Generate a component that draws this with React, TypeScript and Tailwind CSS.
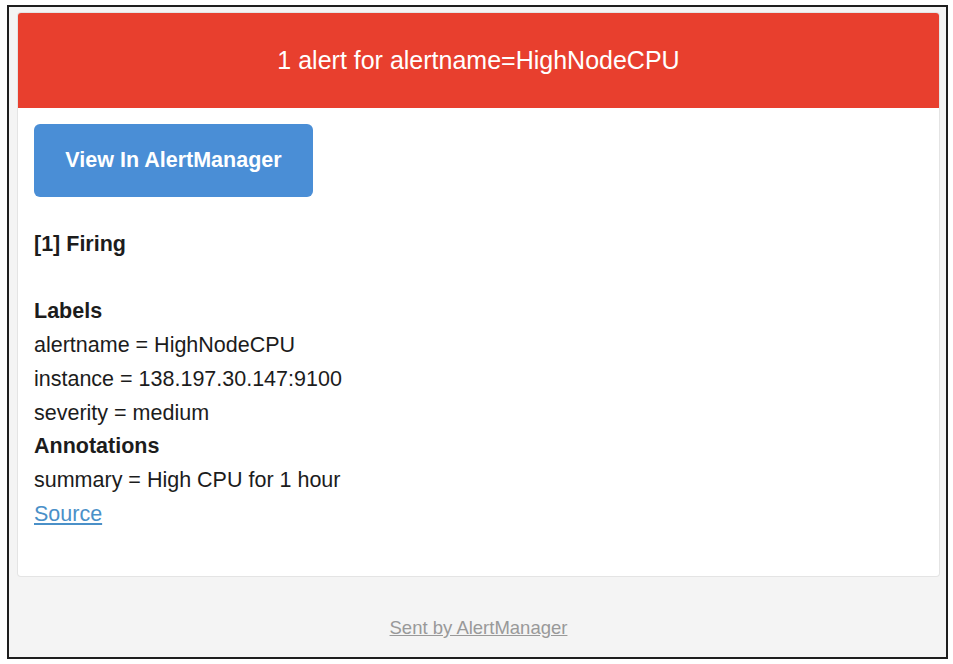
import React from "react";

export default function App() {
  const font = { fontFamily: '"Liberation Sans", Arial, Helvetica, sans-serif' };
  return (
    <div className="w-[953px] h-[664px] bg-white pt-[5px] pl-[7px]" style={font}>
      <div className="w-[941px] h-[654px] border-2 border-[#1e1e1e] bg-[#f4f4f4] pt-[6px] pl-[9px] pr-[7px] flex flex-col">
        <div className="h-[563px] bg-white rounded-[3px] overflow-hidden shadow-[0_0_0_1px_#e4e4e4]">
          <div className="h-[95px] bg-[#e83f2e] flex items-center justify-center text-white text-[25px] leading-none">
            1 alert for alertname=HighNodeCPU
          </div>
          <div className="pt-[16px] pl-[16px] text-[#1c1c1c]">
            <div className="w-[279px] h-[73px] rounded-[6px] bg-[#4a8ed6] flex items-center justify-center text-white font-bold text-[21.5px]">
              View In AlertManager
            </div>
            <div className="mt-[31px] text-[21.5px] leading-[33.7px]">
              <div className="font-bold">[1] Firing</div>
              <div className="h-[33.7px]"></div>
              <div className="font-bold">Labels</div>
              <div>alertname = HighNodeCPU</div>
              <div>instance = 138.197.30.147:9100</div>
              <div>severity = medium</div>
              <div className="font-bold">Annotations</div>
              <div>summary = High CPU for 1 hour</div>
              <div>
                <a className="text-[#4a90c8] underline">Source</a>
              </div>
            </div>
          </div>
        </div>
        <div className="flex justify-center pt-[41px]">
          <a className="text-[#999999] underline text-[18.5px] leading-[21px]">Sent by AlertManager</a>
        </div>
      </div>
    </div>
  );
}
